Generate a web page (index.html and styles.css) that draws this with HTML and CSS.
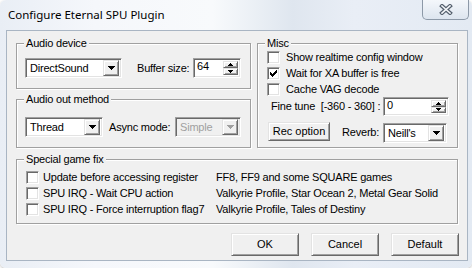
FILE: index.html
```html
<!doctype html>
<html>
<head>
  <title>Configure Eternal SPU Plugin</title>
  <link rel="stylesheet" href="styles.css">
</head>
<body>
  <div class="window">
    <div class="titlebar">
      <span class="title">Configure Eternal SPU Plugin</span>
      <button class="close-button">
        <svg width="14" height="11" viewBox="0 0 14 11">
          <path d="M3 2L11 9M11 2L3 9" stroke="#55606e" stroke-width="4" stroke-linecap="square"/>
          <path d="M3 2L11 9M11 2L3 9" stroke="#f4f6f9" stroke-width="1.6" stroke-linecap="square"/>
        </svg>
      </button>
    </div>
    <div class="client">
      <div class="top-row">
        <div class="left-col">
          <div class="group device-group">
            <span class="group-title">Audio device</span>
            <div class="control-row">
              <div class="combo combo-device">
                <span class="combo-value">DirectSound</span>
                <span class="drop-button"><svg width="7" height="4" viewBox="0 0 7 4"><path d="M0 0h7v1h-1v1h-1v1h-1v1h-1v-1h-1v-1h-1v-1h-1z" fill="#000"/></svg></span>
              </div>
              <span class="label buffer-label">Buffer size:</span>
              <div class="spin spin-buffer">
                <span class="spin-value">64</span>
                <span class="spin-buttons">
                  <span class="spin-btn"><svg width="5" height="3" viewBox="0 0 5 3"><path d="M2 0h1v1h1v1h1v1h-5v-1h1v-1h1z" fill="#000"/></svg></span>
                  <span class="spin-btn"><svg width="5" height="3" viewBox="0 0 5 3"><path d="M0 0h5v1h-1v1h-1v1h-1v-1h-1v-1h-1z" fill="#000"/></svg></span>
                </span>
              </div>
            </div>
          </div>
          <div class="group method-group">
            <span class="group-title">Audio out method</span>
            <div class="control-row">
              <div class="combo combo-thread">
                <span class="combo-value">Thread</span>
                <span class="drop-button"><svg width="7" height="4" viewBox="0 0 7 4"><path d="M0 0h7v1h-1v1h-1v1h-1v1h-1v-1h-1v-1h-1v-1h-1z" fill="#000"/></svg></span>
              </div>
              <span class="label async-label">Async mode:</span>
              <div class="combo combo-async disabled">
                <span class="combo-value">Simple</span>
                <span class="drop-button"><svg width="7" height="4" viewBox="0 0 7 4"><path d="M0 0h7v1h-1v1h-1v1h-1v1h-1v-1h-1v-1h-1v-1h-1z" fill="#a0a0a0"/></svg></span>
              </div>
            </div>
          </div>
        </div>
        <div class="group misc-group">
          <span class="group-title">Misc</span>
          <div class="check-row">
            <span class="checkbox"></span>
            <span class="label">Show realtime config window</span>
          </div>
          <div class="check-row">
            <span class="checkbox checked"><svg width="7" height="7" viewBox="0 0 7 7"><path d="M0 2h1v1h1v1h1v-1h1v-1h1v-1h1v-1h1v3h-1v1h-1v1h-1v1h-1v1h-1v-1h-1v-1h-1v-1h-1z" fill="#000"/></svg></span>
            <span class="label">Wait for XA buffer is free</span>
          </div>
          <div class="check-row">
            <span class="checkbox"></span>
            <span class="label">Cache VAG decode</span>
          </div>
          <div class="control-row fine-row">
            <span class="label">Fine tune&nbsp; [-360 - 360] :</span>
            <div class="spin spin-fine">
              <span class="spin-value">0</span>
              <span class="spin-buttons">
                <span class="spin-btn"><svg width="5" height="3" viewBox="0 0 5 3"><path d="M2 0h1v1h1v1h1v1h-5v-1h1v-1h1z" fill="#000"/></svg></span>
                <span class="spin-btn"><svg width="5" height="3" viewBox="0 0 5 3"><path d="M0 0h5v1h-1v1h-1v1h-1v-1h-1v-1h-1z" fill="#000"/></svg></span>
              </span>
            </div>
          </div>
          <div class="control-row rec-row">
            <button class="push-button rec-button">Rec option</button>
            <span class="label reverb-label">Reverb:</span>
            <div class="combo combo-reverb">
              <span class="combo-value">Neill's</span>
              <span class="drop-button"><svg width="7" height="4" viewBox="0 0 7 4"><path d="M0 0h7v1h-1v1h-1v1h-1v1h-1v-1h-1v-1h-1v-1h-1z" fill="#000"/></svg></span>
            </div>
          </div>
        </div>
      </div>
      <div class="group special-group">
        <span class="group-title">Special game fix</span>
        <div class="fix-list">
          <span class="checkbox"></span>
          <span class="label">Update before accessing register</span>
          <span class="label">FF8, FF9 and some SQUARE games</span>
          <span class="checkbox"></span>
          <span class="label">SPU IRQ - Wait CPU action</span>
          <span class="label">Valkyrie Profile, Star Ocean 2, Metal Gear Solid</span>
          <span class="checkbox"></span>
          <span class="label">SPU IRQ - Force interruption flag7</span>
          <span class="label">Valkyrie Profile, Tales of Destiny</span>
        </div>
      </div>
      <div class="dialog-buttons">
        <button class="push-button">OK</button>
        <button class="push-button">Cancel</button>
        <button class="push-button">Default</button>
      </div>
    </div>
  </div>
</body>
</html>
```
FILE: styles.css
```css
body {
  margin: 0;
  padding: 0;
  background: #fff;
  font: 11px/13px "Liberation Sans", Arial, sans-serif;
  letter-spacing: -0.2px;
  color: #000;
}
body * {
  box-sizing: border-box;
}
.window {
  width: 472px;
  height: 268px;
  display: flex;
  flex-direction: column;
  border-radius: 6px;
  background: linear-gradient(90deg, #e9eef5 0%, #f5f7fb 20%, #f8fafc 45%, #dfe6ef 62%, #e9eef6 75%, #e3eaf3 100%);
  padding: 0 4px 7px 6px;
  box-shadow: 0 1px 3px rgba(0,0,0,.25);
}
.titlebar {
  height: 30px;
  display: flex;
  align-items: flex-start;
  margin-left: -6px;
  margin-right: -4px;
}
.title {
  font: 11.5px "Noto Sans", "Liberation Sans", sans-serif;
  letter-spacing: 0;
  color: #000;
  padding: 7px 0 0 8px;
}
.close-button {
  margin-left: auto;
  margin-right: 3px;
  width: 47px;
  height: 20px;
  padding: 0;
  border: 1px solid #8d99a8;
  border-top: 0;
  border-radius: 0 0 5px 5px;
  background: linear-gradient(#f4f7fb, #dde5ef);
  display: flex;
  align-items: center;
  justify-content: center;
}
.client {
  flex: 1;
  background: #f0f0f0;
  border: 1px solid #a9b5c3;
  padding: 12px 9px 0 9px;
}
.label {
  white-space: nowrap;
}
.top-row {
  display: grid;
  grid-template-columns: 235px 1fr;
  column-gap: 6px;
}
.left-col {
  display: flex;
  flex-direction: column;
  gap: 10px;
}
.group {
  position: relative;
  border: 1px solid #a0a0a0;
  box-shadow: inset 1px 1px 0 #fff, 1px 1px 0 #fff;
}
.group-title {
  position: absolute;
  top: -7px;
  left: 7px;
  padding: 0 2px 0 2px;
  background: #f0f0f0;
  line-height: 13px;
}
.control-row {
  display: flex;
  align-items: center;
}
.device-group {
  height: 46px;
  padding: 14px 9px 0 8px;
}
.method-group {
  height: 49px;
  padding: 17px 9px 0 8px;
}
.buffer-label {
  margin-left: 15px;
}
.async-label {
  margin-left: 6px;
}
.spin-buffer, .combo-async {
  margin-left: auto;
}

/* sunken fields */
.combo, .spin, .checkbox {
  background: #fff;
  border: 1px solid;
  border-color: #a0a0a0 #fff #fff #a0a0a0;
  box-shadow: inset 1px 1px 0 #696969, inset -1px -1px 0 #e3e3e3;
}
.combo {
  height: 20px;
  display: flex;
  align-items: center;
  padding: 2px;
  flex: 0 0 auto;
}
.combo-value {
  padding-left: 2px;
  white-space: nowrap;
}
.combo.disabled {
  background: #f0f0f0;
  color: #a0a0a0;
}
.drop-button {
  margin-left: auto;
  width: 16px;
  height: 16px;
  display: flex;
  align-items: center;
  justify-content: center;
  background: #f0f0f0;
  border: 1px solid;
  border-color: #e3e3e3 #696969 #696969 #e3e3e3;
  box-shadow: inset 1px 1px 0 #fff, inset -1px -1px 0 #a0a0a0;
}
.combo-device { width: 97px; }
.combo-thread { width: 78px; }
.combo-async { width: 66px; }
.combo-reverb { width: 64px; margin-left: auto; margin-right: 2px; }

.spin {
  height: 20px;
  display: flex;
  padding: 2px;
  flex: 0 0 auto;
}
.spin-value {
  padding-left: 1px;
  line-height: 11px;
}
.spin-buttons {
  margin-left: auto;
  width: 15px;
  display: flex;
  flex-direction: column;
}
.spin-btn {
  flex: 1;
  display: flex;
  align-items: center;
  justify-content: center;
  background: #f0f0f0;
  border: 1px solid;
  border-color: #e3e3e3 #696969 #696969 #e3e3e3;
  box-shadow: inset 1px 1px 0 #fff, inset -1px -1px 0 #a0a0a0;
}
.spin-buffer { width: 48px; }
.spin-fine { width: 66px; height: 19px; margin-left: auto; }

.misc-group {
  padding: 5px 8px 0 9px;
}
.check-row {
  height: 16px;
  display: flex;
  align-items: center;
  gap: 6px;
}
.checkbox {
  width: 13px;
  height: 13px;
  flex: 0 0 13px;
  display: flex;
  align-items: center;
  justify-content: center;
}
.fine-row {
  padding-left: 4px;
}
.rec-row {
  margin-top: 6px;
  align-items: flex-start;
}
.reverb-label {
  margin-left: 12px;
  margin-top: 4px;
}
.combo-reverb {
  margin-top: 1px;
}

.push-button {
  font: inherit;
  color: #000;
  background: #f0f0f0;
  border: 1px solid;
  border-color: #e3e3e3 #696969 #696969 #e3e3e3;
  box-shadow: inset 1px 1px 0 #fff, inset -1px -1px 0 #a0a0a0;
  padding: 0;
}
.rec-button {
  width: 62px;
  height: 19px;
  margin-left: 1px;
}

.special-group {
  margin-top: 11px;
  height: 65px;
  padding: 9px 9px 0 9px;
}
.fix-list {
  display: grid;
  grid-template-columns: 13px 169px 1fr;
  grid-auto-rows: 16px;
  column-gap: 4px;
  align-items: center;
}

.dialog-buttons {
  margin-top: 9px;
  display: flex;
  justify-content: flex-end;
  gap: 12px;
  margin-right: -1px;
}
.dialog-buttons .push-button {
  width: 68px;
  height: 23px;
}
```
